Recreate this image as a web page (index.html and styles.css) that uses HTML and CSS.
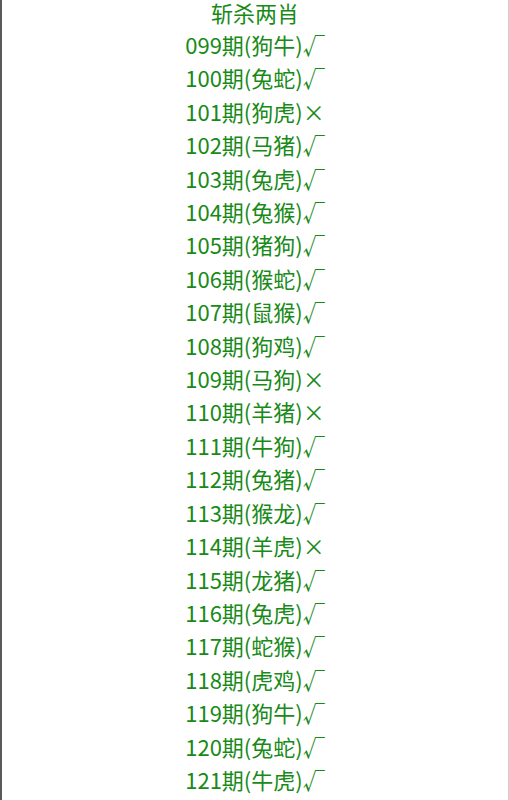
FILE: index.html
```html
<!DOCTYPE html>
<html lang="zh-CN">

<head>
    <meta charset="UTF-8">
    <meta name="viewport" content="width=device-width, initial-scale=1.0">
    <title>斩杀两肖</title>
    <link rel="stylesheet" href="styles.css">
</head>

<body>
    <div class="box">
        <!-- 标题 -->
        <p class="title">斩杀两肖</p>

        <!-- 记录 -->
        <ul class="list">
            <li>099期(狗牛)√</li>
            <li>100期(兔蛇)√</li>
            <li>101期(狗虎)×</li>
            <li>102期(马猪)√</li>
            <li>103期(兔虎)√</li>
            <li>104期(兔猴)√</li>
            <li>105期(猪狗)√</li>
            <li>106期(猴蛇)√</li>
            <li>107期(鼠猴)√</li>
            <li>108期(狗鸡)√</li>
            <li>109期(马狗)×</li>
            <li>110期(羊猪)×</li>
            <li>111期(牛狗)√</li>
            <li>112期(兔猪)√</li>
            <li>113期(猴龙)√</li>
            <li>114期(羊虎)×</li>
            <li>115期(龙猪)√</li>
            <li>116期(兔虎)√</li>
            <li>117期(蛇猴)√</li>
            <li>118期(虎鸡)√</li>
            <li>119期(狗牛)√</li>
            <li>120期(兔蛇)√</li>
            <li>121期(牛虎)√</li>
        </ul>
    </div>
</body>

</html>
```

FILE: styles.css
```css
/* Reset */
* {
    box-sizing: border-box;
    margin: 0;
    padding: 0;
}

body {
    font-family: "Noto Sans CJK SC", "Noto Sans", sans-serif;
    background-color: #fff;
    overflow: hidden;
}

.box {
    height: 800px;
    border-left: 2px solid #5a5a5a;
    border-right: 1px solid #cfcfcf;
    text-align: center;
    color: #188a18;
    font-size: 22px;
    line-height: 33.4px;
}

.title {
    line-height: 24px;
}

.list {
    list-style: none;
    margin-top: 4px;
}
```
